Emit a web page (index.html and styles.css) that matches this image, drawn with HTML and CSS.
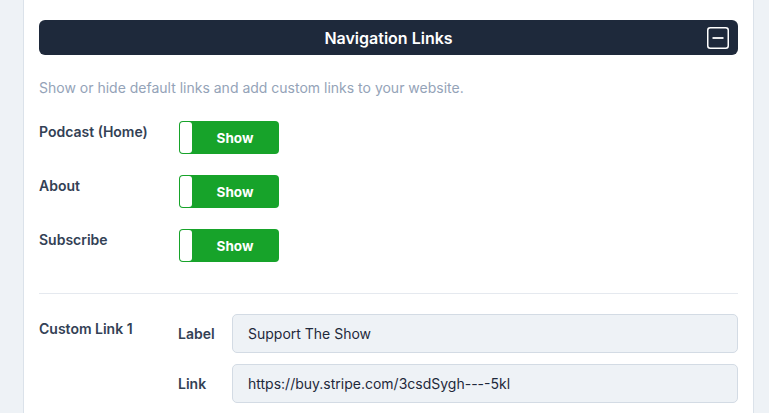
FILE: index.html
```html
<!DOCTYPE html>
<html lang="en">
<head>
    <meta charset="UTF-8">
    <meta name="viewport" content="width=device-width, initial-scale=1.0">
    <title>Navigation Links</title>
    <link rel="stylesheet" href="styles.css">
</head>
<body>

    <div class="panel">
        <div class="section-header">
            <h2>Navigation Links</h2>
            <button class="collapse-btn" aria-label="Collapse">
                <svg width="22" height="22" viewBox="0 0 22 22">
                    <rect x="0.75" y="0.75" width="20.5" height="20.5" rx="2.5" fill="none" stroke="#fff" stroke-width="1.5"/>
                    <line x1="5.5" y1="11" x2="16.5" y2="11" stroke="#fff" stroke-width="1.8"/>
                </svg>
            </button>
        </div>

        <p class="section-desc">Show or hide default links and add custom links to your website.</p>

        <div class="toggle-list">
            <div class="toggle-row">
                <span class="row-label">Podcast (Home)</span>
                <button class="toggle on"><span class="knob"></span><span class="toggle-text">Show</span></button>
            </div>
            <div class="toggle-row">
                <span class="row-label">About</span>
                <button class="toggle on"><span class="knob"></span><span class="toggle-text">Show</span></button>
            </div>
            <div class="toggle-row">
                <span class="row-label">Subscribe</span>
                <button class="toggle on"><span class="knob"></span><span class="toggle-text">Show</span></button>
            </div>
        </div>

        <hr class="divider">

        <div class="custom-link">
            <span class="row-label custom-title">Custom Link 1</span>
            <div class="fields">
                <label class="field">
                    <span class="field-label">Label</span>
                    <input type="text" value="Support The Show">
                </label>
                <label class="field">
                    <span class="field-label">Link</span>
                    <input type="text" value="https://buy.stripe.com/3csdSygh----5kl">
                </label>
            </div>
        </div>
    </div>

</body>
</html>
```

FILE: styles.css
```css
body {
    margin: 0;
    padding-left: 23px;
    background-color: #eef2f6;
    font-family: Inter, "Noto Sans", sans-serif;
    color: #1e293b;
}

.panel {
    width: 731px;
    box-sizing: border-box;
    min-height: 100vh;
    background-color: #fff;
    border-left: 1px solid #dbe2ea;
    border-right: 1px solid #dbe2ea;
    padding: 20px 15px;
}

.section-header {
    position: relative;
    height: 35px;
    background-color: #1e293b;
    border-radius: 6px;
    display: flex;
    align-items: center;
    justify-content: center;
}

.section-header h2 {
    margin: 0;
    color: #fff;
    font-size: 16px;
    font-weight: 600;
}

.collapse-btn {
    position: absolute;
    right: 9px;
    top: 7px;
    padding: 0;
    border: none;
    background: none;
    width: 22px;
    height: 22px;
    cursor: pointer;
}

.collapse-btn svg {
    display: block;
}

.section-desc {
    margin: 23px 0 23px;
    font-size: 14px;
    line-height: 20px;
    color: #94a3b8;
}

.toggle-list {
    display: flex;
    flex-direction: column;
    gap: 21px;
}

.toggle-row {
    display: flex;
    align-items: flex-start;
}

.row-label {
    width: 140px;
    flex-shrink: 0;
    padding-top: 1px;
    font-size: 14px;
    line-height: 20px;
    font-weight: 600;
    color: #334155;
}

.toggle {
    display: flex;
    align-items: stretch;
    width: 100px;
    height: 33px;
    padding: 1px;
    border: none;
    border-radius: 4px;
    background-color: #17a32a;
    cursor: pointer;
    font-family: inherit;
}

.toggle .knob {
    width: 12px;
    background-color: #fff;
    border-radius: 3px;
}

.toggle-text {
    flex: 1;
    display: flex;
    align-items: center;
    justify-content: center;
    color: #fff;
    font-size: 13.5px;
    font-weight: 700;
}

.divider {
    margin: 31px 0 20px;
    border: none;
    border-top: 1px solid #e5e9ef;
}

.custom-link {
    display: flex;
    align-items: flex-start;
}

.custom-title {
    width: 139px;
    padding-top: 5px;
}

.fields {
    flex: 1;
    display: flex;
    flex-direction: column;
    gap: 11px;
}

.field {
    display: flex;
    align-items: center;
}

.field-label {
    width: 54px;
    flex-shrink: 0;
    font-size: 14px;
    font-weight: 600;
    color: #334155;
}

.field input {
    flex: 1;
    height: 39px;
    box-sizing: border-box;
    padding: 0 15px;
    border: 1px solid #d3dbe4;
    border-radius: 5px;
    background-color: #eef2f6;
    font-family: inherit;
    font-size: 14px;
    color: #1e293b;
}
```
